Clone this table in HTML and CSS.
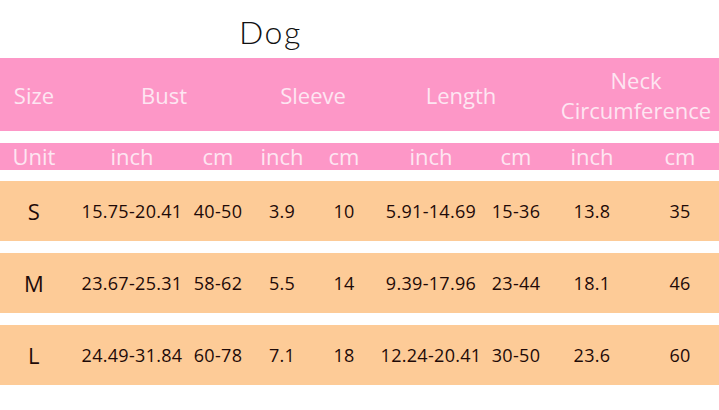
FILE: index.html
```html
<!DOCTYPE html>
<html>
<head>
<meta charset="utf-8">
<link rel="stylesheet" href="styles.css">
</head>
<body>
<div class="page">
  <h1 class="title">Dog</h1>
  <div class="band head">
    <div class="hcell h-size">Size</div>
    <div class="hcell h-bust">Bust</div>
    <div class="hcell h-sleeve">Sleeve</div>
    <div class="hcell h-length">Length</div>
    <div class="hcell h-neck">Neck<br>Circumference</div>
  </div>
  <div class="band units grid">
    <div class="cell">Unit</div>
    <div class="cell">inch</div>
    <div class="cell">cm</div>
    <div class="cell">inch</div>
    <div class="cell">cm</div>
    <div class="cell">inch</div>
    <div class="cell">cm</div>
    <div class="cell">inch</div>
    <div class="cell">cm</div>
  </div>
  <div class="band row grid">
    <div class="cell size">S</div>
    <div class="cell">15.75-20.41</div>
    <div class="cell">40-50</div>
    <div class="cell">3.9</div>
    <div class="cell">10</div>
    <div class="cell">5.91-14.69</div>
    <div class="cell">15-36</div>
    <div class="cell">13.8</div>
    <div class="cell">35</div>
  </div>
  <div class="band row grid">
    <div class="cell size">M</div>
    <div class="cell">23.67-25.31</div>
    <div class="cell">58-62</div>
    <div class="cell">5.5</div>
    <div class="cell">14</div>
    <div class="cell">9.39-17.96</div>
    <div class="cell">23-44</div>
    <div class="cell">18.1</div>
    <div class="cell">46</div>
  </div>
  <div class="band row grid">
    <div class="cell size">L</div>
    <div class="cell">24.49-31.84</div>
    <div class="cell">60-78</div>
    <div class="cell">7.1</div>
    <div class="cell">18</div>
    <div class="cell">12.24-20.41</div>
    <div class="cell">30-50</div>
    <div class="cell">23.6</div>
    <div class="cell">60</div>
  </div>
</div>
</body>
</html>
```
FILE: styles.css
```css
html, body {
  margin: 0;
  padding: 0;
  background: #ffffff;
}
.page {
  width: 719px;
  height: 410px;
  overflow: hidden;
  font-family: "Open Sans", "DejaVu Sans", sans-serif;
}
.title {
  margin: 0;
  height: 58px;
  box-sizing: border-box;
  padding: 12px 0 0 239px;
  font-family: "Lato", "Open Sans", sans-serif;
  font-weight: 300;
  font-size: 32px;
  line-height: 40px;
  color: #111111;
  letter-spacing: 1.5px;
}
.band {
  width: 719px;
}
.head {
  height: 73px;
  background: #fd97c7;
  color: #fde6f2;
  display: flex;
  align-items: center;
  font-size: 22px;
  line-height: 30px;
}
.hcell {
  display: flex;
  justify-content: center;
  text-align: center;
  white-space: nowrap;
}
.h-size { width: 68px; }
.h-bust { width: 192px; }
.h-sleeve { width: 106px; }
.h-length { width: 190px; }
.h-neck { width: 160px; }
.grid {
  display: grid;
  grid-template-columns: 68px 128px 44px 84px 40px 134px 36px 116px 60px;
  align-items: center;
}
.cell {
  display: flex;
  justify-content: center;
  white-space: nowrap;
}
.units {
  margin-top: 12px;
  height: 27px;
  background: #fd97c7;
  color: #fde6f2;
  font-size: 22px;
  line-height: 27px;
}
.row {
  margin-top: 11px;
  height: 60px;
  background: #fdcb97;
  color: #1e0a08;
  font-size: 18px;
  letter-spacing: 0.3px;
}
.row + .row {
  margin-top: 12px;
}
.row .size {
  font-size: 22px;
}
```
